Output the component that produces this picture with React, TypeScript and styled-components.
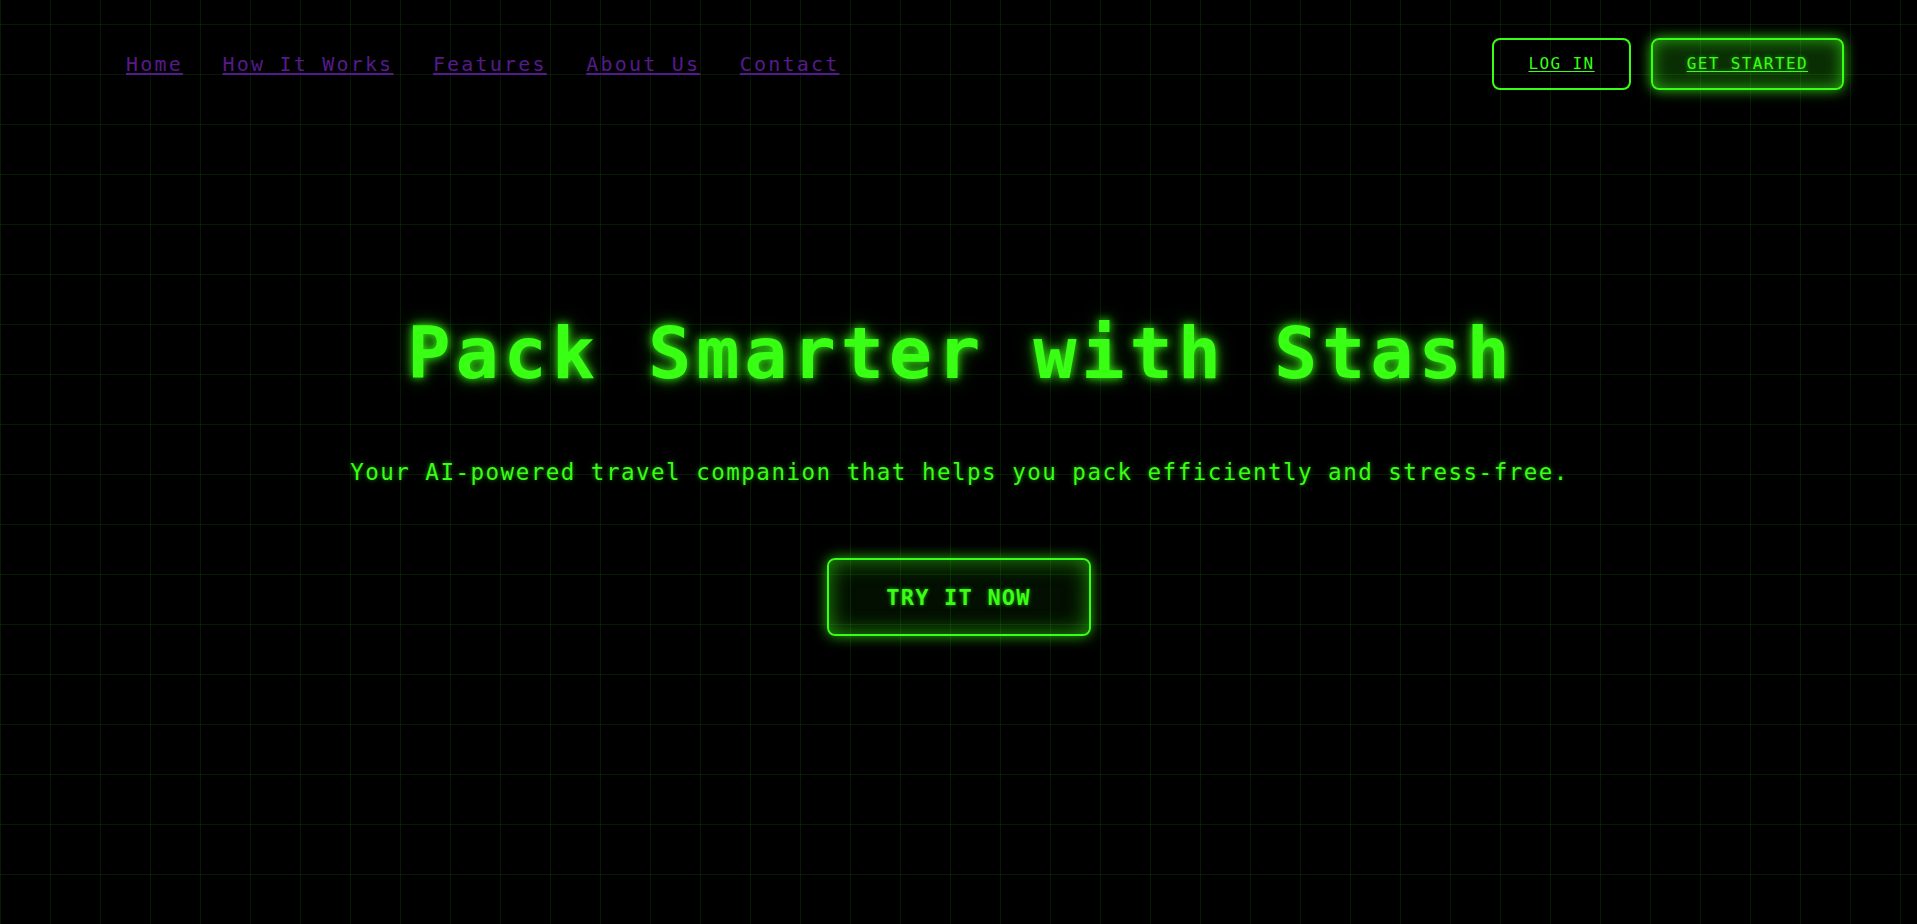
import React from "react";
import styled, { createGlobalStyle, css } from "styled-components";

const GREEN = "#39ff14";

const GlobalStyle = createGlobalStyle`
  html, body {
    margin: 0;
    padding: 0;
    background-color: #000;
  }
  body {
    min-height: 100vh;
    font-family: "DejaVu Sans Mono", "Liberation Mono", monospace;
    color: ${GREEN};
    background-image:
      linear-gradient(rgba(57, 255, 20, 0.1) 1px, transparent 1px),
      linear-gradient(90deg, rgba(57, 255, 20, 0.1) 1px, transparent 1px);
    background-size: 50px 50px;
    background-position: 0 24px, 0 0;
  }
  * { box-sizing: border-box; }
`;

const Page = styled.div`
  min-height: 924px;
  display: flex;
  flex-direction: column;
`;

const Header = styled.header`
  display: flex;
  align-items: center;
  justify-content: space-between;
  padding: 38px 73px 0 126px;
`;

const NavList = styled.nav`
  display: flex;
  align-items: center;
  gap: 39.5px;
  margin-top: 0;
`;

const NavLink = styled.a`
  font-size: 20px;
  letter-spacing: 2.2px;
  line-height: 24px;
  color: #551a8b;
  text-decoration: underline;
  text-underline-offset: 2px;
`;

const Actions = styled.div`
  display: flex;
  align-items: center;
  gap: 20px;
`;

const HeaderButton = styled.a<{ $filled?: boolean }>`
  display: inline-block;
  padding: 14px 34px;
  font-size: 16px;
  line-height: 20px;
  letter-spacing: 1.4px;
  color: ${GREEN};
  text-decoration: underline;
  text-underline-offset: 2px;
  border: 2px solid ${GREEN};
  border-radius: 8px;
  ${(p) =>
    p.$filled
      ? css`
          background: rgba(57, 255, 20, 0.18);
          box-shadow: 0 0 14px rgba(57, 255, 20, 0.8),
            inset 0 0 16px rgba(57, 255, 20, 0.6);
          text-shadow: 0 0 4px rgba(57, 255, 20, 0.6);
        `
      : css`
          background: transparent;
        `}
`;

const Hero = styled.main`
  display: flex;
  flex-direction: column;
  align-items: center;
  margin-top: 227px;
`;

const Title = styled.h1`
  margin: 0;
  font-size: 72px;
  line-height: 72px;
  font-weight: 700;
  letter-spacing: 4.8px;
  padding-left: 5px;
  color: ${GREEN};
  text-shadow: 0 0 8px rgba(57, 255, 20, 0.9), 0 0 18px rgba(57, 255, 20, 0.5);
`;

const Subtitle = styled.p`
  margin: 72px 0 0;
  font-size: 22.5px;
  line-height: 22px;
  letter-spacing: 1.5px;
  padding-left: 2px;
  color: ${GREEN};
  text-shadow: 0 0 5px rgba(57, 255, 20, 0.55);
`;

const CtaButton = styled.button`
  margin-top: 75px;
  width: 264px;
  height: 78px;
  font-family: inherit;
  font-size: 22px;
  font-weight: 700;
  letter-spacing: 1.2px;
  color: ${GREEN};
  background: rgba(57, 255, 20, 0.06);
  border: 2px solid ${GREEN};
  border-radius: 8px;
  box-shadow: 0 0 14px rgba(57, 255, 20, 0.7), inset 0 0 22px rgba(57, 255, 20, 0.55);
  text-shadow: 0 0 4px rgba(57, 255, 20, 0.6);
  cursor: pointer;
`;

const navItems = ["Home", "How It Works", "Features", "About Us", "Contact"];

export default function App() {
  return (
    <>
      <GlobalStyle />
      <Page>
        <Header>
          <NavList>
            {navItems.map((item) => (
              <NavLink key={item} href="#">
                {item}
              </NavLink>
            ))}
          </NavList>
          <Actions>
            <HeaderButton href="#">LOG IN</HeaderButton>
            <HeaderButton href="#" $filled>
              GET STARTED
            </HeaderButton>
          </Actions>
        </Header>
        <Hero>
          <Title>Pack Smarter with Stash</Title>
          <Subtitle>
            Your AI-powered travel companion that helps you pack efficiently and stress-free.
          </Subtitle>
          <CtaButton>TRY IT NOW</CtaButton>
        </Hero>
      </Page>
    </>
  );
}
